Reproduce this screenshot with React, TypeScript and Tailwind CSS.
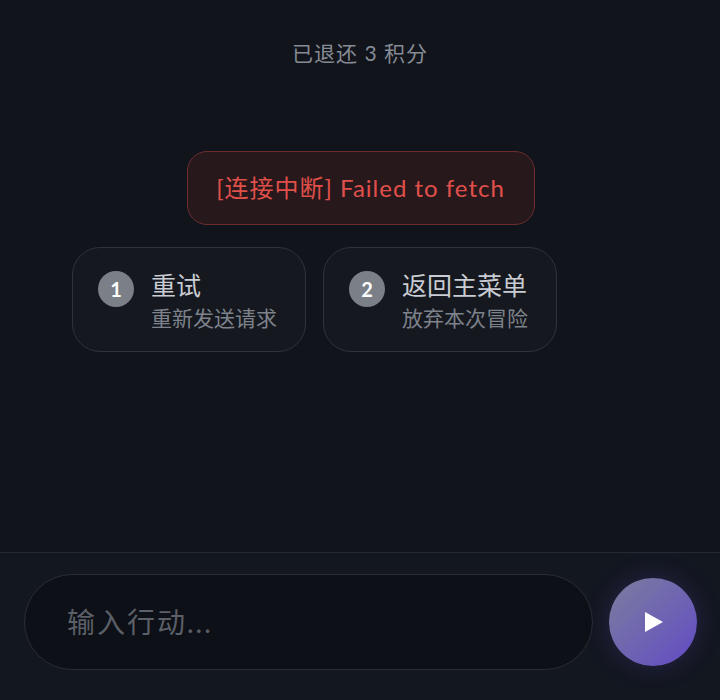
const options = [
  { n: 1, title: '重试', desc: '重新发送请求' },
  { n: 2, title: '返回主菜单', desc: '放弃本次冒险' },
];

export default function App() {
  return (
    <div
      className="w-[720px] h-[700px] flex flex-col bg-[#11141b] overflow-hidden"
      style={{ fontFamily: '"Lato", "Noto Sans CJK SC", sans-serif' }}
    >
      <div className="flex-1 flex flex-col">
        <div className="pt-[38px] text-center text-[21px] leading-[30px] tracking-[1px] text-[#868b94]">已退还 3 积分</div>

        <div className="mt-[83px] flex justify-center pl-[1px]">
          <div className="h-[74px] w-[348px] flex items-center justify-center rounded-[20px] border border-[#6e2d2d] bg-[#27181c] text-[24px] tracking-[1px] text-[#e0504a]">
            [连接中断] Failed to fetch
          </div>
        </div>

        <div className="mt-[22px] flex gap-[17px] pl-[72px]">
          {options.map((o) => (
            <div
              key={o.n}
              className="w-[234px] h-[105px] rounded-[28px] border border-[#30333b] bg-[#15181f] flex items-start gap-[17px] pl-[25px] pt-[20px]"
            >
              <div className="mt-[3px] w-[36px] h-[36px] rounded-full bg-[#7a7f88] flex items-center justify-center text-white text-[20px] font-bold shrink-0">
                {o.n}
              </div>
              <div className="flex flex-col">
                <div className="text-[25px] leading-[34px] text-[#c9ccd2]">{o.title}</div>
                <div className="text-[21px] leading-[31px] text-[#7d828b]">{o.desc}</div>
              </div>
            </div>
          ))}
        </div>
      </div>

      <div className="h-[148px] border-t border-[#262a33] bg-[#131720] flex items-start gap-[16px] pl-[24px] pt-[21px]">
        <div className="w-[569px] h-[96px] rounded-full border border-[#2a2d35] bg-[#0d1016] flex items-center pl-[42px]">
          <span className="text-[28px] tracking-[2px] text-[#5b5f67]">输入行动...</span>
        </div>
        <div className="mt-[4px] w-[88px] h-[88px] rounded-full bg-gradient-to-br from-[#7d7c9c] to-[#6448c4] flex items-center justify-center shadow-[0_0_24px_rgba(100,80,200,0.25)]">
          <svg width="18" height="20" viewBox="0 0 18 20" className="ml-[2px]">
            <polygon points="0,0 18,10 0,20" fill="white" />
          </svg>
        </div>
      </div>
    </div>
  );
}
